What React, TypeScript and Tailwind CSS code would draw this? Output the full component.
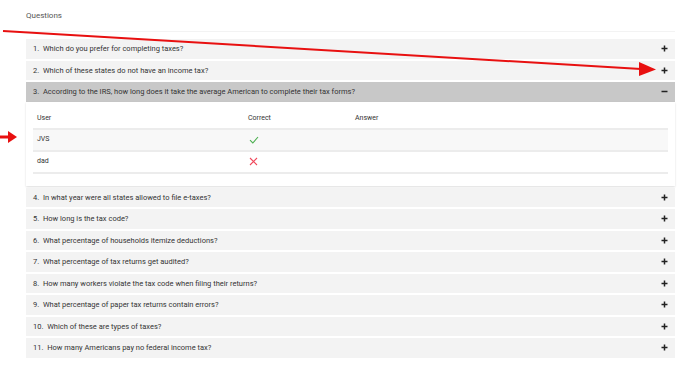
import React from 'react';

const questions = [
  'Which do you prefer for completing taxes?',
  'Which of these states do not have an income tax?',
  'According to the IRS, how long does it take the average American to complete their tax forms?',
  'In what year were all states allowed to file e-taxes?',
  'How long is the tax code?',
  'What percentage of households itemize deductions?',
  'What percentage of tax returns get audited?',
  'How many workers violate the tax code when filing their returns?',
  'What percentage of paper tax returns contain errors?',
  'Which of these are types of taxes?',
  'How many Americans pay no federal income tax?',
];

const answers = [
  { user: 'JVS', correct: true },
  { user: 'dad', correct: false },
];

function PlusIcon({ open }: { open: boolean }) {
  return (
    <svg width="7" height="7" viewBox="0 0 7 7" className="shrink-0">
      <rect x="0.5" y="2.75" width="6" height="1.5" fill="#222" />
      {!open && <rect x="2.75" y="0.5" width="1.5" height="6" fill="#222" />}
    </svg>
  );
}

function AnswerTable() {
  return (
    <div className="bg-white shadow-[0_1px_2px_rgba(0,0,0,0.14)] px-[7px] pt-[8px] pb-[12px]">
      <div className="flex h-[20px] items-center border-b-2 border-[#ececec] text-[7px] text-[#333]">
        <div className="w-[211px] pl-[4px]">User</div>
        <div className="w-[107px] pl-[4px]">Correct</div>
        <div className="pl-[4px]">Answer</div>
      </div>
      {answers.map((a, i) => (
        <div
          key={a.user}
          className={`flex h-[22px] items-center border-b-2 border-[#ececec] text-[7px] text-[#333] ${
            i === 0 ? 'bg-[#f8f8f8]' : 'bg-white'
          }`}
        >
          <div className="w-[211px] pl-[4px]">{a.user}</div>
          <div className="w-[107px] pl-[5px]">
            {a.correct ? (
              <svg width="10" height="8" viewBox="0 0 10 8">
                <path d="M1 4.2 L3.8 7 L9 1" fill="none" stroke="#4caf50" strokeWidth="1.1" />
              </svg>
            ) : (
              <svg width="9" height="9" viewBox="0 0 9 9">
                <path d="M1 1 L8 8 M8 1 L1 8" fill="none" stroke="#f0485b" strokeWidth="1.1" />
              </svg>
            )}
          </div>
          <div />
        </div>
      ))}
    </div>
  );
}

export default function App() {
  return (
    <div
      className="relative w-[688px] h-[378px] bg-white overflow-hidden"
      style={{ fontFamily: 'Roboto, "Liberation Sans", sans-serif' }}
    >
      <div className="px-[26px] pr-[13px]">
        <div className="h-[32px] flex items-center border-b border-[#f3f3f3] text-[8px] text-[#555]">
          Questions
        </div>
        <div className="pt-[7px] flex flex-col gap-[2px]">
          {questions.map((q, i) => {
            const open = i === 2;
            return (
              <div key={q}>
                <div
                  className={`h-[19.5px] flex items-center justify-between pl-[7px] pr-[7px] text-[7.5px] text-[#333] ${
                    open ? 'bg-[#c8c8c8]' : 'bg-[#f3f3f3]'
                  }`}
                >
                  <span>
                    {i + 1}.&nbsp; {q}
                  </span>
                  <PlusIcon open={open} />
                </div>
                {open && <AnswerTable />}
              </div>
            );
          })}
        </div>
      </div>

      {/* annotation arrows drawn over the screenshot */}
      <svg className="absolute inset-0 pointer-events-none" width="688" height="378">
        <line x1="3" y1="31" x2="641" y2="69" stroke="#e81010" strokeWidth="2" />
        <polygon points="639,62 656,69.5 639,76" fill="#e81010" />
        <line x1="0" y1="137" x2="9" y2="137" stroke="#e81010" strokeWidth="3" />
        <polygon points="8,131 17,137 8,143" fill="#e81010" />
      </svg>
    </div>
  );
}
